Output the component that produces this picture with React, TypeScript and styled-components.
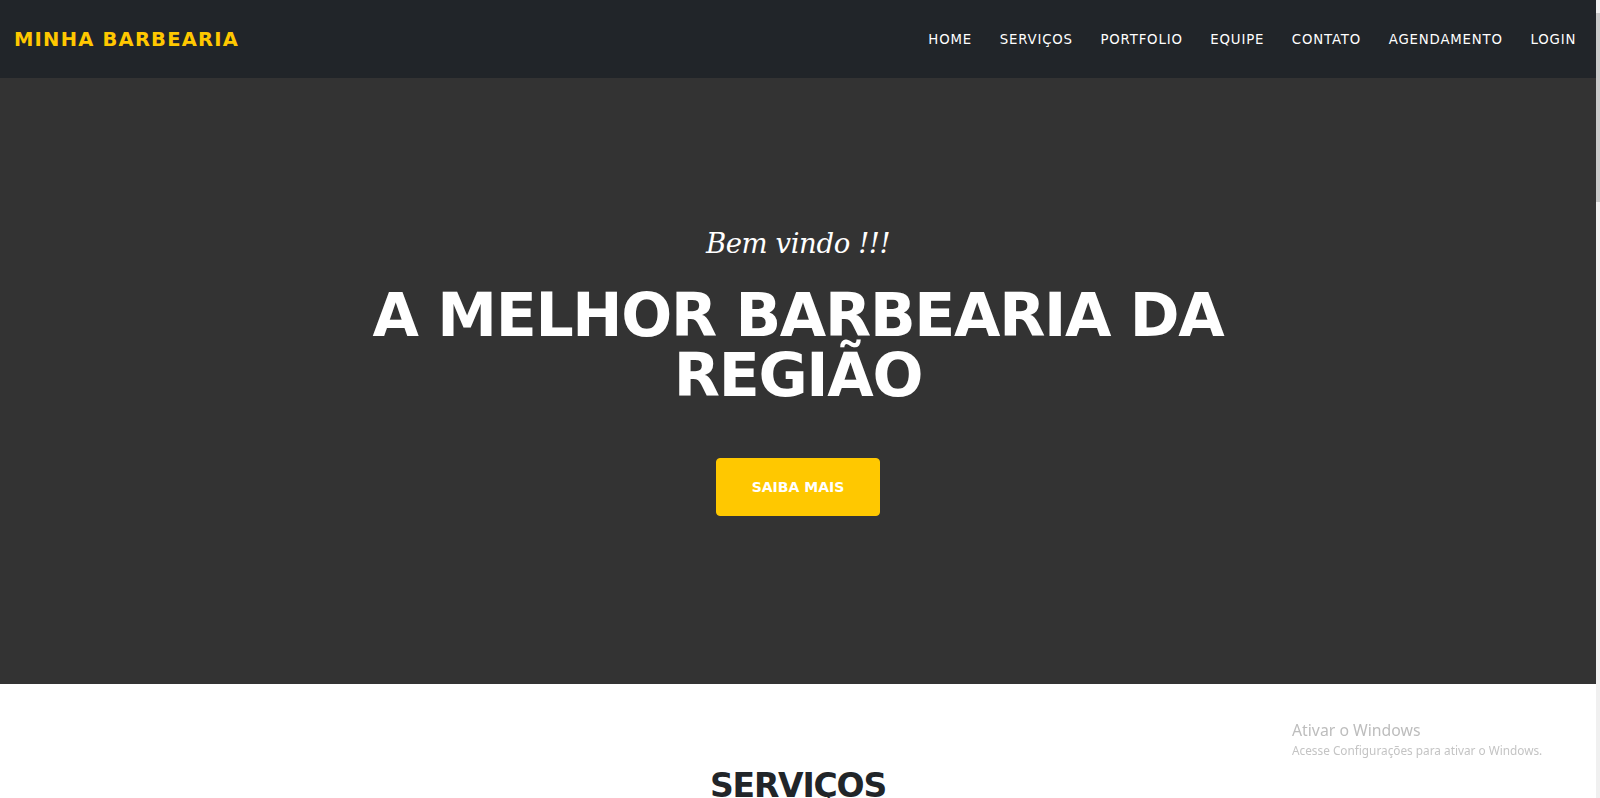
import React from "react";
import styled, { createGlobalStyle } from "styled-components";

const GlobalStyle = createGlobalStyle`
  html, body {
    margin: 0;
    padding: 0;
    height: 100%;
    overflow: hidden;
    background: #ffffff;
  }
  body {
    font-family: "DejaVu Sans", "Noto Sans", sans-serif;
  }
  * { box-sizing: border-box; }
`;

const Shell = styled.div`
  display: flex;
  width: 1600px;
  height: 798px;
  overflow: hidden;
`;

const Page = styled.div`
  flex: 1;
  min-width: 0;
  display: flex;
  flex-direction: column;
  background: #ffffff;
`;

const ScrollTrack = styled.div`
  width: 4px;
  flex-shrink: 0;
  background: #f0f0f0;
  padding-top: 13px;
  display: flex;
  flex-direction: column;
`;

const ScrollThumb = styled.div`
  height: 189px;
  background: #cbcbcb;
`;

const NavBar = styled.nav`
  height: 78px;
  background: #212529;
  display: flex;
  align-items: center;
  justify-content: space-between;
  padding: 0 6px 0 14px;
  flex-shrink: 0;
`;

const Brand = styled.a`
  font-family: "DejaVu Sans", sans-serif;
  font-weight: 700;
  font-size: 19.5px;
  letter-spacing: 0.0625em;
  color: #ffc800;
  text-transform: uppercase;
  text-decoration: none;
`;

const NavList = styled.ul`
  display: flex;
  list-style: none;
  margin: 0;
  padding: 0;
`;

const NavLink = styled.a`
  display: block;
  padding: 10px 13.8px;
  font-family: "DejaVu Sans", sans-serif;
  font-size: 13.3px;
  letter-spacing: 0.0625em;
  color: #ffffff;
  text-transform: uppercase;
  text-decoration: none;
`;

const Hero = styled.header`
  height: 606px;
  background: #333333;
  display: flex;
  flex-direction: column;
  align-items: center;
  padding-top: 150px;
  text-align: center;
  color: #ffffff;
  flex-shrink: 0;
`;

const Subheading = styled.div`
  font-family: "DejaVu Serif", "Liberation Serif", serif;
  font-style: italic;
  font-size: 27.5px;
  line-height: 31px;
  letter-spacing: -0.4px;
  margin-bottom: 26px;
`;

const Heading = styled.h1`
  margin: 0 0 53px;
  font-family: "DejaVu Sans", sans-serif;
  font-weight: 700;
  font-size: 60px;
  line-height: 60px;
  letter-spacing: -1.3px;
  text-transform: uppercase;
`;

const HeadingLine = styled.span`
  display: block;
`;

const CtaButton = styled.a`
  display: inline-flex;
  align-items: center;
  justify-content: center;
  height: 58px;
  padding: 0 34.5px;
  background: #ffc800;
  border: 1px solid #ffc800;
  border-radius: 4px;
  font-family: "DejaVu Sans", sans-serif;
  font-weight: 700;
  font-size: 14px;
  color: #ffffff;
  text-transform: uppercase;
  text-decoration: none;
`;

const Section = styled.section`
  padding-top: 82px;
  display: flex;
  flex-direction: column;
  align-items: center;
`;

const SectionHeading = styled.h2`
  margin: 0;
  font-family: "DejaVu Sans", sans-serif;
  font-weight: 700;
  font-size: 33px;
  line-height: 40px;
  letter-spacing: -1.2px;
  color: #212529;
  text-transform: uppercase;
`;

const Watermark = styled.div`
  position: fixed;
  left: 1292px;
  top: 720px;
  font-family: "Noto Sans", "Open Sans", sans-serif;
  color: #bdbdbd;
  pointer-events: none;
`;

const WatermarkTitle = styled.div`
  font-size: 15.8px;
  line-height: 20px;
  margin-bottom: 1.6px;
`;

const WatermarkText = styled.div`
  font-size: 11.8px;
  line-height: 16px;
  color: #c4c4c4;
`;

const links = ["Home", "Serviços", "Portfolio", "Equipe", "Contato", "Agendamento", "Login"];

export default function App() {
  return (
    <>
      <GlobalStyle />
      <Shell>
        <Page>
          <NavBar>
            <Brand href="#">Minha Barbearia</Brand>
            <NavList>
              {links.map((l) => (
                <li key={l}>
                  <NavLink href="#">{l}</NavLink>
                </li>
              ))}
            </NavList>
          </NavBar>
          <Hero>
            <Subheading>Bem vindo !!!</Subheading>
            <Heading>
              <HeadingLine>A melhor barbearia da</HeadingLine>
              <HeadingLine>região</HeadingLine>
            </Heading>
            <CtaButton href="#">Saiba mais</CtaButton>
          </Hero>
          <Section>
            <SectionHeading>Serviços</SectionHeading>
          </Section>
        </Page>
        <ScrollTrack>
          <ScrollThumb />
        </ScrollTrack>
      </Shell>
      <Watermark>
        <WatermarkTitle>Ativar o Windows</WatermarkTitle>
        <WatermarkText>Acesse Configurações para ativar o Windows.</WatermarkText>
      </Watermark>
    </>
  );
}
